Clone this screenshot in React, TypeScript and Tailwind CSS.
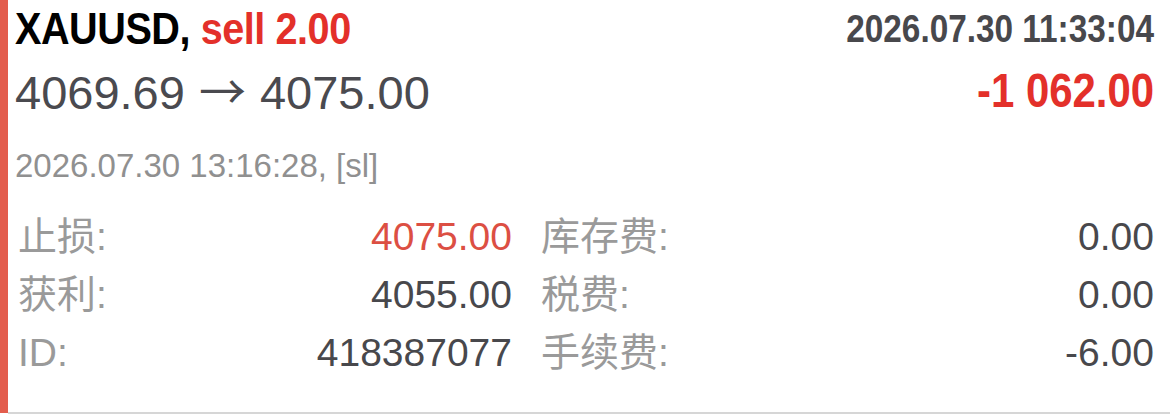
import React from "react";

type Row = { label: string; value: string; red?: boolean; label2: string; value2: string };

const rows: Row[] = [
  { label: "止损:", value: "4075.00", red: true, label2: "库存费:", value2: "0.00" },
  { label: "获利:", value: "4055.00", label2: "税费:", value2: "0.00" },
  { label: "ID:", value: "418387077", label2: "手续费:", value2: "-6.00" },
];

export default function App() {
  return (
    <div
      className="flex h-[418px] w-[1170px] bg-white"
      style={{ fontFamily: '"Liberation Sans", "Noto Sans CJK SC", sans-serif' }}
    >
      <div className="h-[413px] w-[8px] shrink-0 bg-[#e35d4d]" />
      <div className="flex h-[414px] flex-1 flex-col border-b-2 border-[#d6d6d6] pl-[7px] pr-[16px]">
        <div className="flex h-[56px] items-center justify-between pt-[1px]">
          <div className="origin-left scale-x-[0.9] text-[44px] font-bold leading-none tracking-[-0.5px] text-black">
            XAUUSD, <span className="text-[#e3302a]">sell 2.00</span>
          </div>
          <div className="origin-right scale-x-[0.855] text-[39px] font-bold leading-none text-[#48484c]">
            2026.07.30 11:33:04
          </div>
        </div>
        <div className="flex h-[68px] items-center justify-between">
          <div className="text-[47px] leading-none text-[#4a4a4f]">
            4069.69
            <span className="mx-[14px]" style={{ fontFamily: '"Noto Sans CJK SC", sans-serif' }}>→</span>
            4075.00
          </div>
          <div className="origin-right scale-x-[0.855] text-[49px] font-bold leading-none text-[#e3302a]">
            -1 062.00
          </div>
        </div>
        <div className="flex h-[74px] items-center pt-[8px] text-[33px] leading-none text-[#909090]">
          2026.07.30 13:16:28, [sl]
        </div>
        <div className="flex flex-col pt-[9px]">
          {rows.map((r) => (
            <div key={r.label} className="flex h-[58px] items-center text-[39px] leading-none">
              <div className="w-[140px] pl-[3px] text-[#9a9a9a]">{r.label}</div>
              <div className={`w-[357px] text-right ${r.red ? "text-[#dc4f43]" : "text-[#48484c]"}`}>{r.value}</div>
              <div className="ml-[29px] flex-1 text-[#9a9a9a]">{r.label2}</div>
              <div className="text-right text-[#48484c]">{r.value2}</div>
            </div>
          ))}
        </div>
      </div>
    </div>
  );
}
